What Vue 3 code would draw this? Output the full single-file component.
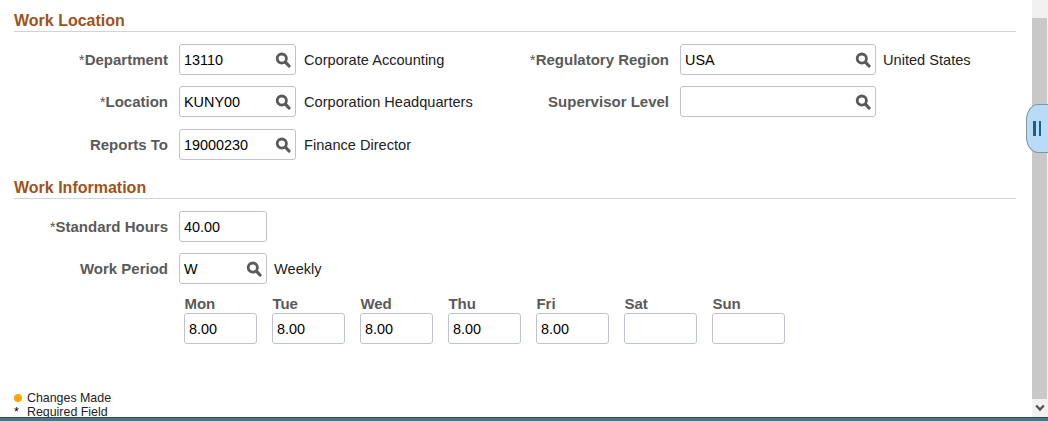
<script setup>
const leftRows = [
  { label: 'Department', req: true, value: '13110', desc: 'Corporate Accounting' },
  { label: 'Location', req: true, value: 'KUNY00', desc: 'Corporation Headquarters' },
  { label: 'Reports To', req: false, value: '19000230', desc: 'Finance Director' }
]
const rightRows = [
  { label: 'Regulatory Region', req: true, value: 'USA', desc: 'United States' },
  { label: 'Supervisor Level', req: false, value: '', desc: '' }
]
const days = [
  { d: 'Mon', v: '8.00' }, { d: 'Tue', v: '8.00' }, { d: 'Wed', v: '8.00' },
  { d: 'Thu', v: '8.00' }, { d: 'Fri', v: '8.00' }, { d: 'Sat', v: '' }, { d: 'Sun', v: '' }
]
</script>

<template>
  <div class="page">
    <div class="content">
      <main class="main">
        <h2 class="head">Work Location</h2>
        <div class="columns">
          <div class="col col-left">
            <div v-for="r in leftRows" :key="r.label" class="row">
              <span class="label"><span v-if="r.req" class="star">*</span>{{ r.label }}</span>
              <div class="field wide">
                <span class="val">{{ r.value }}</span>
                <svg class="mag" viewBox="0 0 16 16"><circle cx="6.8" cy="6.6" r="4.6" fill="none" stroke="#5a5a5a" stroke-width="2.8"/><path d="M10.4 10.2l3.6 3.8" stroke="#5a5a5a" stroke-width="3.2" stroke-linecap="round"/></svg>
              </div>
              <span class="desc">{{ r.desc }}</span>
            </div>
          </div>
          <div class="col col-right">
            <div v-for="r in rightRows" :key="r.label" class="row">
              <span class="label rlabel"><span v-if="r.req" class="star">*</span>{{ r.label }}</span>
              <div class="field rwide">
                <span class="val">{{ r.value }}</span>
                <svg class="mag" viewBox="0 0 16 16"><circle cx="6.8" cy="6.6" r="4.6" fill="none" stroke="#5a5a5a" stroke-width="2.8"/><path d="M10.4 10.2l3.6 3.8" stroke="#5a5a5a" stroke-width="3.2" stroke-linecap="round"/></svg>
              </div>
              <span class="desc rdesc">{{ r.desc }}</span>
            </div>
          </div>
        </div>

        <h2 class="head second">Work Information</h2>
        <div class="info">
          <div class="row">
            <span class="label"><span class="star">*</span>Standard Hours</span>
            <div class="field narrow"><span class="val">40.00</span></div>
          </div>
          <div class="row">
            <span class="label">Work Period</span>
            <div class="field narrow">
              <span class="val">W</span>
              <svg class="mag" viewBox="0 0 16 16"><circle cx="6.8" cy="6.6" r="4.6" fill="none" stroke="#5a5a5a" stroke-width="2.8"/><path d="M10.4 10.2l3.6 3.8" stroke="#5a5a5a" stroke-width="3.2" stroke-linecap="round"/></svg>
            </div>
            <span class="desc short">Weekly</span>
          </div>
          <div class="days">
            <div v-for="d in days" :key="d.d" class="day">
              <span class="dayname">{{ d.d }}</span>
              <div class="daybox"><span class="val">{{ d.v }}</span></div>
            </div>
          </div>
        </div>

        <div class="legend">
          <div class="leg"><span class="dot"></span><span>Changes Made</span></div>
          <div class="leg"><span class="mark">*</span><span>Required Field</span></div>
        </div>
      </main>
      <aside class="scroll">
        <div class="btn"></div>
        <div class="track"></div>
        <div class="btn bottom">
          <svg width="10" height="8" viewBox="0 0 10 8"><path d="M1.2 1.5L5 5.6l3.8-4.1" fill="none" stroke="#505050" stroke-width="2.2"/></svg>
        </div>
      </aside>
      <div class="handle"><span></span><span></span></div>
    </div>
    <div class="strip"></div>
  </div>
</template>

<style>
html, body { margin: 0; background: #fff; overflow: hidden; }
</style>

<style scoped>
.page { width: 1048px; height: 421px; display: flex; flex-direction: column; font-family: "Liberation Sans", Arial, sans-serif; overflow: hidden; }
.content { position: relative; flex: 1; display: flex; min-height: 0; }
.main { flex: 1; padding: 0 16px 0 14px; min-width: 0; overflow: hidden; }
.head { margin: 0; height: 32px; box-sizing: border-box; padding-top: 12px; font-size: 16px; line-height: 18px; font-weight: 700; color: #a0521c; border-bottom: 1px solid #d0d3da; }
.second { margin-top: 7px; height: 32px; padding-top: 12px; }
.columns { display: flex; padding-top: 12px; }
.col-left { width: 466px; }
.row { display: flex; align-items: center; height: 31px; margin-bottom: 11px; }
.col-left .row:nth-child(2) { margin-bottom: 12px; }
.col-left .row:last-child { margin-bottom: 0; }
.label { width: 154px; text-align: right; margin-right: 11px; font-size: 15px; font-weight: 700; color: #5a5a5a; white-space: nowrap; }
.rlabel { width: 189px; }
.star { font-weight: 400; }
.field { box-sizing: border-box; height: 31px; display: flex; align-items: center; justify-content: space-between; border: 1px solid #bcc3cf; border-radius: 3px; padding: 0 4px; background: #fff; }
.wide { width: 117px; }
.rwide { width: 196px; }
.narrow { width: 88px; }
.val { font-size: 14.4px; color: #000; }
.mag { width: 16px; height: 16px; }
.desc { margin-left: 8px; font-size: 14.6px; color: #222; white-space: nowrap; }
.rdesc { margin-left: 7px; }
.short { margin-left: 7px; }
.info { padding-top: 12px; }
.days { display: flex; gap: 15px; margin-left: 170px; margin-top: 12px; }
.day { display: flex; flex-direction: column; width: 73px; }
.dayname { font-size: 15px; font-weight: 700; line-height: 16px; color: #5a5a5a; height: 17px; margin-left: 0.4px; }
.daybox { box-sizing: border-box; width: 73px; height: 31px; display: flex; align-items: center; border: 1px solid #bcc3cf; border-radius: 3px; padding: 0 4px; }
.legend { margin-top: 47px; font-size: 12.4px; color: #222; }
.leg { display: flex; align-items: center; height: 14px; }
.dot { width: 8px; height: 8px; border-radius: 50%; background: #ffa500; margin-right: 5px; }
.mark { width: 13px; color: #000; }
.scroll { width: 16px; display: flex; flex-direction: column; background: #f1f1f1; }
.btn { height: 18px; background: #f1f1f1; display: flex; align-items: center; justify-content: center; flex-shrink: 0; }
.track { flex: 1; background: #c8c8c8; width: 15px; }
.handle { position: absolute; left: 1026px; top: 104px; width: 22px; height: 49px; box-sizing: border-box; background: #b8dcf8; border: 1px solid #7f95a8; border-right: none; border-radius: 12px 0 0 12px / 16px 0 0 16px; display: flex; justify-content: center; align-items: center; gap: 3px; padding-right: 1px; }
.handle span { width: 2.5px; height: 15px; background: #1c5f80; }
.strip { height: 4px; background: #4a7584; border-top: 1px solid #2f4a55; box-sizing: border-box; }
</style>
